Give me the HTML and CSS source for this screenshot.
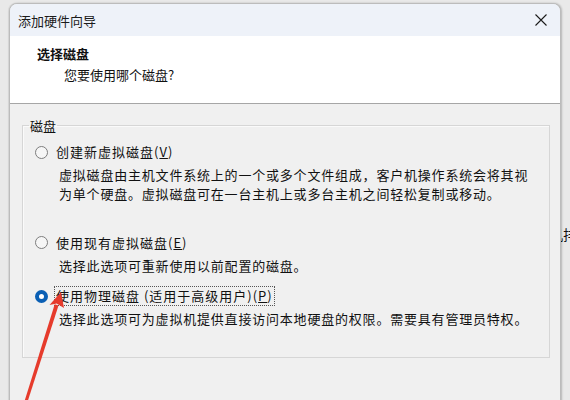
FILE: index.html
```html
<!DOCTYPE html>
<html lang="zh-CN">
<head>
<meta charset="utf-8">
<title>添加硬件向导</title>
<link rel="stylesheet" href="styles.css">
</head>
<body>
<span class="behind-text">机排</span>
<div class="dialog">
  <div class="titlebar">
    <span class="title">添加硬件向导</span>
    <svg class="close" width="12" height="12" viewBox="0 0 12 12"><path d="M0.5 0.5 L11.5 11.5 M11.5 0.5 L0.5 11.5" stroke="#1b1b1b" stroke-width="1.1" fill="none"/></svg>
  </div>
  <div class="header">
    <div class="h-title">选择磁盘</div>
    <div class="h-sub">您要使用哪个磁盘?</div>
  </div>
  <div class="body">
    <fieldset class="group">
      <legend class="legend">磁盘</legend>
      <div class="option opt-first">
        <div class="row"><span class="radio"></span><span class="label">创建新虚拟磁盘(<u>V</u>)</span></div>
        <div class="desc">虚拟磁盘由主机文件系统上的一个或多个文件组成，客户机操作系统会将其视<br>为单个硬盘。虚拟磁盘可在一台主机上或多台主机之间轻松复制或移动。</div>
      </div>
      <div class="option">
        <div class="row"><span class="radio"></span><span class="label">使用现有虚拟磁盘(<u>E</u>)</span></div>
        <div class="desc">选择此选项可重新使用以前配置的磁盘。</div>
      </div>
      <div class="option">
        <div class="row"><span class="radio checked"></span><span class="label focus">使用物理磁盘 (适用于高级用户)(<u>P</u>)</span></div>
        <div class="desc">选择此选项可为虚拟机提供直接访问本地硬盘的权限。需要具有管理员特权。</div>
      </div>
    </fieldset>
  </div>
</div>
<svg class="arrow" width="570" height="400" viewBox="0 0 570 400">
  <polygon points="58.5,305.5 54.7,304.3 24.6,401 27.6,401.6" fill="#e63b2c"/>
  <polygon points="61,292 49.5,305 56.6,303.5 64,308" fill="#e63b2c"/>
</svg>
</body>
</html>
```
FILE: styles.css
```css
html, body {
  margin: 0;
  padding: 0;
}
body {
  width: 570px;
  height: 400px;
  overflow: hidden;
  background: #e9e9e9;
  padding: 3px 0 0 9px;
  box-sizing: border-box;
  position: relative;
  font-family: "Noto Sans CJK SC", "Microsoft YaHei", sans-serif;
  font-size: 13px;
  color: #111;
}
.behind-text {
  position: absolute;
  left: 549px;
  top: 224px;
  font-size: 14px;
  color: #111;
  white-space: nowrap;
}
.dialog {
  position: relative;
  width: 552px;
  height: 420px;
  box-sizing: border-box;
  border: 1px solid #bcbcbc;
  border-radius: 8px 8px 0 0;
  background: #f0f0f0;
  overflow: hidden;
  box-shadow: 1px 0 2px rgba(0,0,0,0.22), -1px 0 1px rgba(0,0,0,0.08);
}
.titlebar {
  height: 32px;
  background: #eef2f9;
  display: flex;
  align-items: center;
  justify-content: space-between;
  padding: 0 13px 0 8px;
}
.title {
  font-size: 13px;
  color: #1b1b1b;
  line-height: 1;
}
.close {
  display: block;
}
.header {
  background: #fff;
  height: 68px;
  padding: 8px 0 0 27px;
  box-sizing: border-box;
  border-bottom: 1px solid #a6a6a6;
}
.h-title {
  font-weight: bold;
  line-height: 20px;
  font-size: 13px;
}
.h-sub {
  padding-left: 27px;
  line-height: 20px;
  margin-top: 1px;
}
.body {
  padding: 12px 10px 0 12px;
}
.group {
  margin: 0;
  border: 1px solid #d6d6d6;
  box-shadow: inset 1px 1px 0 #fafafa;
  padding: 7px 0 26px 12px;
  height: 242px;
  box-sizing: border-box;
}
.legend {
  padding: 0 1px;
  margin-left: -6px;
  line-height: 19px;
  font-size: 13px;
}
.option {
  margin-bottom: 11px;
}
.row {
  display: flex;
  align-items: center;
  height: 20px;
  gap: 6px;
}
.radio {
  width: 13px;
  height: 13px;
  border: 1px solid #7d7d7d;
  border-radius: 50%;
  background: #f6f6f6;
  box-sizing: border-box;
  flex: none;
}
.radio.checked {
  border: 4.5px solid #0a5fb4;
  background: #fff;
}
.label {
  letter-spacing: 1px;
  line-height: 18px;
  padding: 0 1px;
  border: 1px dotted transparent;
}
.label.focus {
  border-color: #555;
}
.desc {
  margin-top: 4px;
  padding-left: 24px;
  line-height: 18.5px;
  letter-spacing: 0.8px;
  font-size: 13px;
}
.opt-first .desc {
  min-height: 55.5px;
}
.arrow {
  position: absolute;
  left: 0;
  top: 0;
  pointer-events: none;
}
```
